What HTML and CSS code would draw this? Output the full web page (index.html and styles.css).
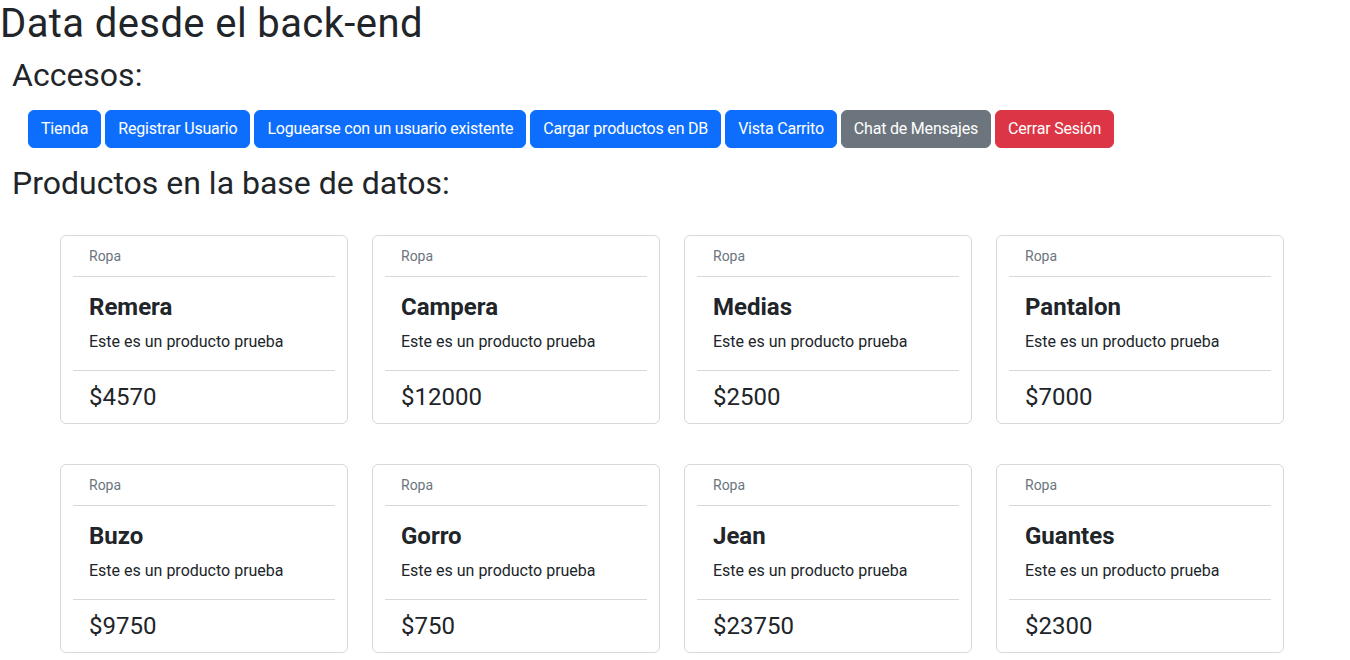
FILE: index.html
```html
<!DOCTYPE html>
<html lang="es">
<head>
<meta charset="utf-8">
<title>Data desde el back-end</title>
<link rel="stylesheet" href="styles.css">
</head>
<body>
<h1 class="title">Data desde el back-end</h1>
<section class="section">
  <h2 class="subtitle">Accesos:</h2>
  <div class="buttons">
    <a class="btn btn-primary" href="#">Tienda</a>
    <a class="btn btn-primary" href="#">Registrar Usuario</a>
    <a class="btn btn-primary" href="#">Loguearse con un usuario existente</a>
    <a class="btn btn-primary" href="#">Cargar productos en DB</a>
    <a class="btn btn-primary" href="#">Vista Carrito</a>
    <a class="btn btn-secondary" href="#">Chat de Mensajes</a>
    <a class="btn btn-danger" href="#">Cerrar Sesión</a>
  </div>
  <h2 class="subtitle products-title">Productos en la base de datos:</h2>
</section>
<div class="grid">
  <div class="card"><div class="card-in"><div class="card-head">Ropa</div><div class="card-body"><h4 class="card-title">Remera</h4><p class="card-text">Este es un producto prueba</p></div><div class="card-foot">$4570</div></div></div>
  <div class="card"><div class="card-in"><div class="card-head">Ropa</div><div class="card-body"><h4 class="card-title">Campera</h4><p class="card-text">Este es un producto prueba</p></div><div class="card-foot">$12000</div></div></div>
  <div class="card"><div class="card-in"><div class="card-head">Ropa</div><div class="card-body"><h4 class="card-title">Medias</h4><p class="card-text">Este es un producto prueba</p></div><div class="card-foot">$2500</div></div></div>
  <div class="card"><div class="card-in"><div class="card-head">Ropa</div><div class="card-body"><h4 class="card-title">Pantalon</h4><p class="card-text">Este es un producto prueba</p></div><div class="card-foot">$7000</div></div></div>
  <div class="card"><div class="card-in"><div class="card-head">Ropa</div><div class="card-body"><h4 class="card-title">Buzo</h4><p class="card-text">Este es un producto prueba</p></div><div class="card-foot">$9750</div></div></div>
  <div class="card"><div class="card-in"><div class="card-head">Ropa</div><div class="card-body"><h4 class="card-title">Gorro</h4><p class="card-text">Este es un producto prueba</p></div><div class="card-foot">$750</div></div></div>
  <div class="card"><div class="card-in"><div class="card-head">Ropa</div><div class="card-body"><h4 class="card-title">Jean</h4><p class="card-text">Este es un producto prueba</p></div><div class="card-foot">$23750</div></div></div>
  <div class="card"><div class="card-in"><div class="card-head">Ropa</div><div class="card-body"><h4 class="card-title">Guantes</h4><p class="card-text">Este es un producto prueba</p></div><div class="card-foot">$2300</div></div></div>
</div>
</body>
</html>
```
FILE: styles.css
```css
* { box-sizing: border-box; }
html, body { margin: 0; padding: 0; }
body {
  font-family: Roboto, "Liberation Sans", sans-serif;
  color: #212529;
  background: #fff;
  font-size: 16px;
  line-height: 1.5;
}
.title {
  margin: 0 0 8px 0;
  font-size: 40px;
  font-weight: 400;
  line-height: 48px;
  letter-spacing: 0.4px;
}
.section { padding-left: 12px; }
.subtitle {
  margin: 0 0 16px 0;
  font-size: 32px;
  font-weight: 400;
  line-height: 38px;
}
.buttons {
  display: flex;
  flex-wrap: wrap;
  gap: 4px;
  padding-left: 16px;
  margin-bottom: 16px;
}
.btn {
  display: inline-block;
  padding: 6px 12px;
  font-size: 16px;
  line-height: 24px;
  letter-spacing: -0.2px;
  border: 1px solid transparent;
  border-radius: 6px;
  color: #fff;
  text-decoration: none;
}
.btn-primary { background: #0d6efd; border-color: #0d6efd; }
.btn-secondary { background: #6c757d; border-color: #6c757d; }
.btn-danger { background: #dc3545; border-color: #dc3545; }
.products-title { margin-bottom: 33px; }
.grid {
  display: grid;
  grid-template-columns: repeat(4, 288px);
  column-gap: 24px;
  row-gap: 40px;
  padding-left: 60px;
}
.card {
  border: 1px solid #d6d8db;
  border-radius: 6px;
  background: #fff;
}
.card-in { padding: 0 12px; }
.card-head {
  padding: 10px 16px;
  font-size: 14px;
  line-height: 20px;
  color: #6c757d;
  border-bottom: 1px solid #d6d8db;
}
.card-body {
  padding: 16px 16px 16px 16px;
  border-bottom: 1px solid #d6d8db;
}
.card-title {
  margin: 0 0 9px 0;
  font-size: 24px;
  font-weight: 700;
  line-height: 28px;
}
.card-text {
  margin: 0;
  font-size: 16px;
  line-height: 24px;
}
.card-foot {
  padding: 12px 16px 12px;
  font-size: 24px;
  line-height: 28px;
}
```
